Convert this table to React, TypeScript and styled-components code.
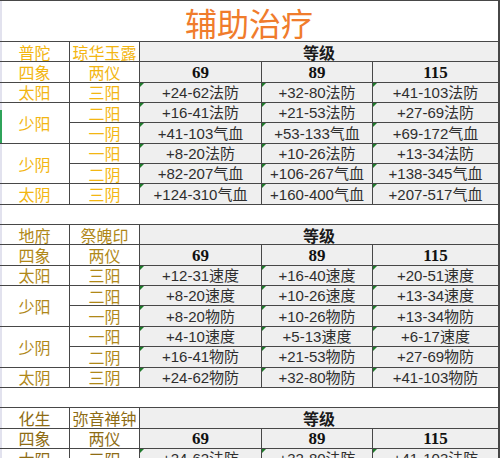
import React from "react";
import styled, { createGlobalStyle } from "styled-components";

const Global = createGlobalStyle`
  html, body { margin: 0; padding: 0; background: #ffffff; overflow: hidden; }
  body { width: 500px; height: 458px; }
`;

const LINE = "#474747";
const CJK = `"Noto Sans CJK SC", "Noto Sans", sans-serif`;

const Sheet = styled.div`
  display: grid;
  width: 500px;
  box-sizing: border-box;
  grid-template-columns: 69px 69px 121px 110px 125px;
  grid-template-rows: 40px repeat(22, 19.35px);
  gap: 1px;
  padding: 1px 1px 1px 0;
  background: ${LINE};
`;

const Cell = styled.div<{ $first?: boolean; $rows?: number; $cols?: number }>`
  display: flex;
  align-items: center;
  justify-content: center;
  position: relative;
  white-space: nowrap;
  line-height: 1;
  background: #ffffff;
  ${(p) => (p.$rows ? `grid-row: span ${p.$rows};` : "")}
  ${(p) => (p.$cols ? `grid-column: span ${p.$cols};` : "")}
  ${(p) => (p.$first ? `box-shadow: inset 2px 0 0 #e2e2ee;` : "")}
`;

const TitleCell = styled(Cell)`
  grid-column: 1 / -1;
  font-family: ${CJK};
  font-size: 32px;
  color: #f07c2c;
  padding-top: 2px;
`;

const BlankRow = styled(Cell)`
  grid-column: 1 / -1;
`;

const Label = styled(Cell)<{ $color: string }>`
  font-family: ${CJK};
  font-size: 16px;
  color: ${(p) => p.$color};
`;

const GradeHead = styled(Cell)`
  grid-column: span 3;
  background: #efefef;
  font-family: ${CJK};
  font-weight: 700;
  font-size: 16px;
  color: #1a1a1a;
`;

const Level = styled(Cell)`
  background: #efefef;
  font-family: "Liberation Serif", serif;
  font-weight: 700;
  font-size: 17px;
  color: #111111;
`;

const Data = styled(Cell)`
  background: #efefef;
  font-family: "Liberation Sans", ${CJK};
  font-size: 15px;
  color: #2e2e2e;
  &::before {
    content: "";
    position: absolute;
    left: 0;
    top: 0;
    border-top: 4px solid #1e7a2a;
    border-right: 4px solid transparent;
  }
`;

const SelMark = styled.div`
  position: absolute;
  left: 0;
  top: 110px;
  width: 2px;
  height: 33px;
  background: #2fa35a;
`;

type Row = { a?: string; span?: number; b: string; v: [string, string, string] };

type Section = {
  color: string;
  name: string;
  item: string;
  rows: Row[];
};

const sections: Section[] = [
  {
    color: "#f3b612",
    name: "普陀",
    item: "琼华玉露",
    rows: [
      { a: "太阳", b: "三阳", v: ["+24-62法防", "+32-80法防", "+41-103法防"] },
      { a: "少阳", span: 2, b: "二阳", v: ["+16-41法防", "+21-53法防", "+27-69法防"] },
      { b: "一阴", v: ["+41-103气血", "+53-133气血", "+69-172气血"] },
      { a: "少阴", span: 2, b: "一阳", v: ["+8-20法防", "+10-26法防", "+13-34法防"] },
      { b: "二阴", v: ["+82-207气血", "+106-267气血", "+138-345气血"] },
      { a: "太阴", b: "三阴", v: ["+124-310气血", "+160-400气血", "+207-517气血"] },
    ],
  },
  {
    color: "#b08818",
    name: "地府",
    item: "祭魄印",
    rows: [
      { a: "太阳", b: "三阳", v: ["+12-31速度", "+16-40速度", "+20-51速度"] },
      { a: "少阳", span: 2, b: "二阳", v: ["+8-20速度", "+10-26速度", "+13-34速度"] },
      { b: "一阴", v: ["+8-20物防", "+10-26物防", "+13-34物防"] },
      { a: "少阴", span: 2, b: "一阳", v: ["+4-10速度", "+5-13速度", "+6-17速度"] },
      { b: "二阴", v: ["+16-41物防", "+21-53物防", "+27-69物防"] },
      { a: "太阴", b: "三阴", v: ["+24-62物防", "+32-80物防", "+41-103物防"] },
    ],
  },
  {
    color: "#8e6c14",
    name: "化生",
    item: "弥音禅钟",
    rows: [
      { a: "太阳", b: "三阳", v: ["+24-62法防", "+32-80法防", "+41-103法防"] },
    ],
  },
];

function SectionRows({ s, last }: { s: Section; last: boolean }) {
  return (
    <>
      <Label $first $color={s.color}>{s.name}</Label>
      <Label $color={s.color}>{s.item}</Label>
      <GradeHead>等级</GradeHead>
      <Label $first $color={s.color}>四象</Label>
      <Label $color={s.color}>两仪</Label>
      <Level>69</Level>
      <Level>89</Level>
      <Level>115</Level>
      {s.rows.map((r, i) => (
        <React.Fragment key={i}>
          {r.a && (
            <Label $first $rows={r.span} $color={s.color}>
              {r.a}
            </Label>
          )}
          <Label $color={s.color}>{r.b}</Label>
          {r.v.map((t, j) => (
            <Data key={j}>{t}</Data>
          ))}
        </React.Fragment>
      ))}
      {!last && <BlankRow $first />}
    </>
  );
}

export default function App() {
  return (
    <>
      <Global />
      <Sheet>
        <TitleCell $first>辅助治疗</TitleCell>
        {sections.map((s, i) => (
          <SectionRows key={i} s={s} last={i === sections.length - 1} />
        ))}
      </Sheet>
      <SelMark />
    </>
  );
}
